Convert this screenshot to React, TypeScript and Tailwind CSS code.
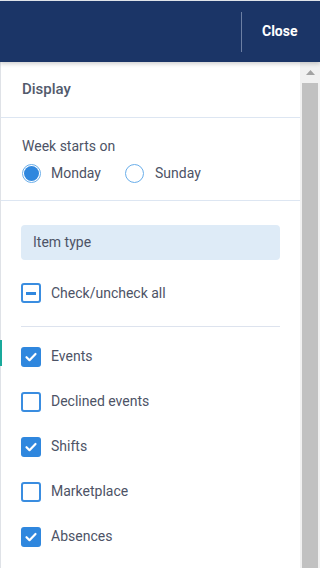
import React from 'react';

const Checkbox = ({ state }: { state: 'on' | 'off' | 'some' }) => {
  if (state === 'on') {
    return (
      <span className="flex h-5 w-5 items-center justify-center rounded-[3px] bg-[#2f87de]">
        <svg width="14" height="14" viewBox="0 0 14 14" fill="none">
          <path d="M2.5 7.2l3 3 6-6.2" stroke="#fff" strokeWidth="2.2" strokeLinecap="round" strokeLinejoin="round" />
        </svg>
      </span>
    );
  }
  return (
    <span className="flex h-5 w-5 items-center justify-center rounded-[3px] border-2 border-[#3a8de0] bg-white">
      {state === 'some' && <span className="h-[3px] w-[10px] bg-[#2f87de]" />}
    </span>
  );
};

const Radio = ({ checked }: { checked?: boolean }) => (
  <span className="flex h-[19px] w-[19px] items-center justify-center rounded-full border border-[#6aaeea] bg-white">
    {checked && <span className="h-[15px] w-[15px] rounded-full bg-[#2f87de]" />}
  </span>
);

const items: { label: string; on: boolean }[] = [
  { label: 'Events', on: true },
  { label: 'Declined events', on: false },
  { label: 'Shifts', on: true },
  { label: 'Marketplace', on: false },
  { label: 'Absences', on: true },
];

export default function App() {
  return (
    <div className="relative flex h-[568px] w-[320px] flex-col overflow-hidden bg-white font-['Roboto',sans-serif] text-[14px] text-[#4d5366]">
      <div className="h-px bg-[#e4e8ee]" />
      <header className="relative z-10 flex h-[61px] items-center justify-end bg-[#1b3567] shadow-[0_2px_4px_rgba(0,0,0,0.18)]">
        <div className="h-[40px] w-px bg-[#6c7fa3]" />
        <span className="w-[78px] pl-[20px] text-[14px] font-bold text-white">Close</span>
      </header>

      <div className="flex flex-1">
        <div className="w-px bg-[#dfe2e7]" />
        <div className="flex w-[299px] flex-col">
          <div className="flex h-[55px] items-center pl-[21px] text-[15px] font-medium text-[#525a6c]">Display</div>
          <div className="h-px bg-[#dde6f2]" />

          <div className="flex h-[82px] flex-col pl-[21px] pt-[19px]">
            <span className="leading-[18px]">Week starts on</span>
            <div className="mt-[8px] flex items-center">
              <Radio checked />
              <span className="ml-[10px]">Monday</span>
              <span className="ml-[24px]">
                <Radio />
              </span>
              <span className="ml-[11px]">Sunday</span>
            </div>
          </div>
          <div className="h-px bg-[#dde6f2]" />

          <div className="px-[20px] pt-[24px]">
            <div className="flex h-[35px] items-center rounded-[4px] bg-[#deebf7] pl-[12px]">Item type</div>
            <div className="flex h-[66px] items-center">
              <Checkbox state="some" />
              <span className="ml-[10px]">Check/uncheck all</span>
            </div>
            <div className="h-px bg-[#dde3ee]" />
            <div className="flex flex-col pt-[7px]">
              {items.map((it) => (
                <div key={it.label} className="flex h-[45px] items-center">
                  <Checkbox state={it.on ? 'on' : 'off'} />
                  <span className="ml-[10px]">{it.label}</span>
                </div>
              ))}
            </div>
          </div>
        </div>

        <div className="flex w-[20px] flex-col bg-[#f1f1f1] pl-[2px] pr-[2px]">
          <div className="flex h-[21px] items-center justify-center">
            <svg width="9" height="5" viewBox="0 0 9 5">
              <path d="M0 5L4.5 0L9 5Z" fill="#a3a3a3" />
            </svg>
          </div>
          <div className="flex-1 bg-[#c1c1c1]" />
        </div>
      </div>

      <div className="absolute left-0 top-[340px] h-[26px] w-[2px] bg-[#19a99b]" />
    </div>
  );
}
